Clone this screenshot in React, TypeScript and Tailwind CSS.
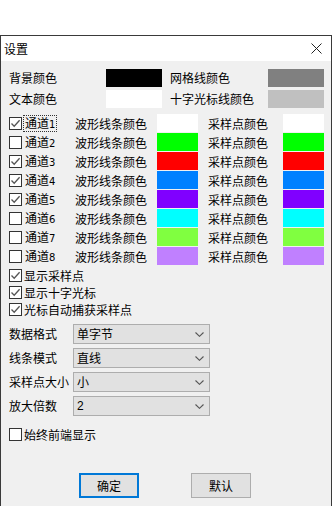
import React from "react";

const font = { fontFamily: '"Noto Sans CJK SC", "Liberation Sans", sans-serif' };

function Check({ checked }: { checked: boolean }) {
  return (
    <div className="w-[13px] h-[13px] border border-[#333333] bg-white flex items-center justify-center shrink-0">
      {checked && (
        <svg width="11" height="11" viewBox="0 0 11 11">
          <path d="M1.5 5.5 L4.2 8.3 L9.6 2.2" fill="none" stroke="#555555" strokeWidth="1.3" />
        </svg>
      )}
    </div>
  );
}

function Chevron() {
  return (
    <svg width="9" height="5" viewBox="0 0 9 5">
      <path d="M0.5 0.5 L4.5 4.3 L8.5 0.5" fill="none" stroke="#555555" strokeWidth="1.1" />
    </svg>
  );
}

const channels = [
  { n: "1", c: true, color: "#ffffff" },
  { n: "2", c: false, color: "#00ff00" },
  { n: "3", c: true, color: "#ff0000" },
  { n: "4", c: true, color: "#0080ff" },
  { n: "5", c: true, color: "#8000ff" },
  { n: "6", c: false, color: "#00ffff" },
  { n: "7", c: false, color: "#80ff40" },
  { n: "8", c: false, color: "#c080ff" },
];

const selects = [
  { label: "数据格式", value: "单字节" },
  { label: "线条模式", value: "直线" },
  { label: "采样点大小", value: "小" },
  { label: "放大倍数", value: "2" },
];

export default function App() {
  return (
    <div className="w-[332px] h-[506px] bg-white text-black text-[12px] leading-none flex flex-col overflow-hidden" style={font}>
      <div className="h-[35px] shrink-0 bg-white" />
      <div className="flex-1 flex flex-col border-t border-l border-r border-[#3a3a3a]">
        <div className="h-[25px] shrink-0 bg-white flex items-center justify-between pl-[3px] pr-[9px]">
          <span>设置</span>
          <svg width="11" height="11" viewBox="0 0 11 11">
            <path d="M0.5 0.5 L10.5 10.5 M10.5 0.5 L0.5 10.5" stroke="#222222" strokeWidth="1" />
          </svg>
        </div>
        <div className="flex-1 bg-[#f0f0f0] flex flex-col pt-[8px]">
          <div className="flex flex-col gap-[3px]">
            <div className="flex items-center h-[18px]">
              <span className="w-[105px] pl-[8px]">背景颜色</span>
              <div className="w-[56px] h-[18px] bg-black" />
              <span className="w-[106px] pl-[8px]">网格线颜色</span>
              <div className="w-[56px] h-[18px] bg-[#808080]" />
            </div>
            <div className="flex items-center h-[18px]">
              <span className="w-[105px] pl-[8px]">文本颜色</span>
              <div className="w-[56px] h-[18px] bg-white" />
              <span className="w-[106px] pl-[8px]">十字光标线颜色</span>
              <div className="w-[56px] h-[18px] bg-[#c0c0c0]" />
            </div>
          </div>
          <div className="flex flex-col mt-[6px]">
            {channels.map((ch, i) => (
              <div key={ch.n} className="flex items-center h-[19px]">
                <div className="w-[74px] pl-[8px] flex items-center">
                  <Check checked={ch.c} />
                  <span
                    className={
                      i === 0
                        ? "ml-[1px] px-[1px] py-[1px] border border-dotted border-[#333]"
                        : "ml-[2px] px-[1px] py-[2px]"
                    }
                  >
                    通道<span style={{ fontFamily: '"DejaVu Sans", sans-serif' }} className="text-[10px]">{ch.n}</span>
                  </span>
                </div>
                <span className="w-[82px]">波形线条颜色</span>
                <div className="w-[41px] h-[18px] self-start" style={{ backgroundColor: ch.color }} />
                <span className="w-[85px] pl-[10px]">采样点颜色</span>
                <div className="w-[41px] h-[18px] self-start" style={{ backgroundColor: ch.color }} />
              </div>
            ))}
          </div>
          <div className="flex flex-col mt-[1px]">
            {["显示采样点", "显示十字光标", "光标自动捕获采样点"].map((t) => (
              <div key={t} className="flex items-center h-[17px] pl-[8px]">
                <Check checked={true} />
                <span className="ml-[2px]">{t}</span>
              </div>
            ))}
          </div>
          <div className="flex flex-col gap-[4px] mt-[6px]">
            {selects.map((s) => (
              <div key={s.label} className="flex items-center h-[20px]">
                <span className="w-[72px] pl-[8px] whitespace-nowrap">{s.label}</span>
                <div className="w-[137px] h-[20px] bg-[#e1e1e1] border border-[#adadad] flex items-center justify-between pl-[3px] pr-[5px]">
                  <span style={s.value === "2" ? { fontFamily: '"Liberation Sans", sans-serif' } : undefined}>{s.value}</span>
                  <Chevron />
                </div>
              </div>
            ))}
          </div>
          <div className="flex items-center h-[17px] pl-[8px] mt-[10px]">
            <Check checked={false} />
            <span className="ml-[2px]">始终前端显示</span>
          </div>
          <div className="flex mt-[30px] pl-[78px] gap-[52px]">
            <div className="w-[60px] h-[25px] bg-[#e1e1e1] border-2 border-[#0078d7] flex items-center justify-center">
              确定
            </div>
            <div className="w-[60px] h-[25px] bg-[#e1e1e1] border border-[#adadad] flex items-center justify-center">
              默认
            </div>
          </div>
        </div>
      </div>
    </div>
  );
}
